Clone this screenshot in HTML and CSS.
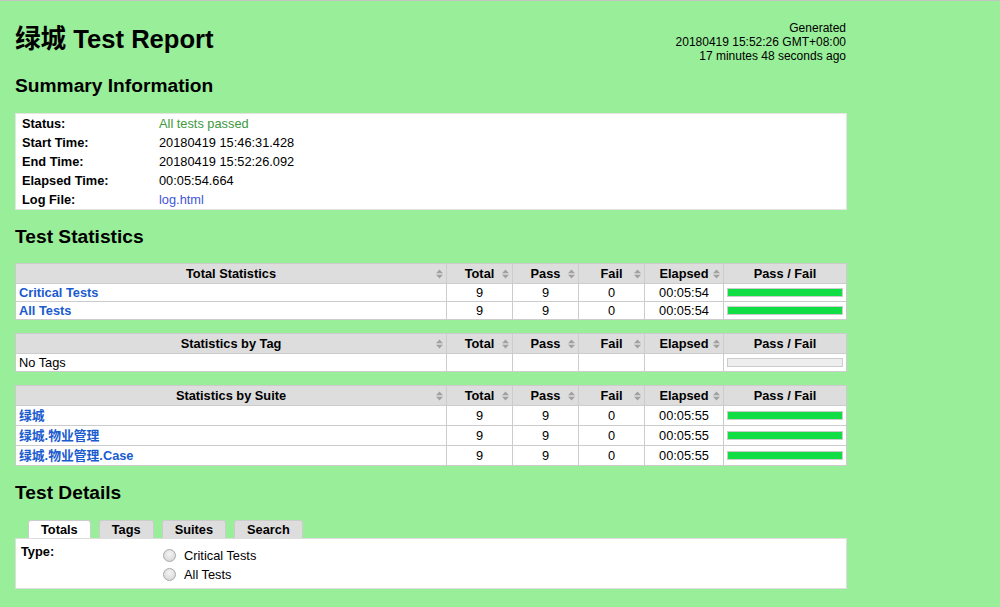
FILE: index.html
```html
<!DOCTYPE html>
<html>
<head>
<meta charset="utf-8">
<title>绿城 Test Report</title>
<link rel="stylesheet" href="styles.css">
</head>
<body>
<div class="page">
  <header class="header">
    <h1>绿城 Test Report</h1>
    <div class="generated">Generated<br>20180419 15:52:26 GMT+08:00<br>17 minutes 48 seconds ago</div>
  </header>

  <h2 class="h2 h2-summary">Summary Information</h2>
  <table class="summary">
    <tr><th>Status:</th><td class="pass-text">All tests passed</td></tr>
    <tr><th>Start Time:</th><td>20180419 15:46:31.428</td></tr>
    <tr><th>End Time:</th><td>20180419 15:52:26.092</td></tr>
    <tr><th>Elapsed Time:</th><td>00:05:54.664</td></tr>
    <tr><th>Log File:</th><td><a class="plain-link" href="#">log.html</a></td></tr>
  </table>

  <h2 class="h2 h2-stats">Test Statistics</h2>

  <table class="stats">
    <colgroup><col class="c-name"><col class="c-num"><col class="c-num"><col class="c-num"><col class="c-el"><col class="c-bar"></colgroup>
    <thead>
      <tr>
        <th class="sortable">Total Statistics<svg class="sort" width="7" height="10" viewBox="0 0 7 10"><path d="M3.5 0.5L7 4.2H0zM0 5.8h7L3.5 9.5z"/></svg></th>
        <th class="sortable">Total<svg class="sort" width="7" height="10" viewBox="0 0 7 10"><path d="M3.5 0.5L7 4.2H0zM0 5.8h7L3.5 9.5z"/></svg></th>
        <th class="sortable">Pass<svg class="sort" width="7" height="10" viewBox="0 0 7 10"><path d="M3.5 0.5L7 4.2H0zM0 5.8h7L3.5 9.5z"/></svg></th>
        <th class="sortable">Fail<svg class="sort" width="7" height="10" viewBox="0 0 7 10"><path d="M3.5 0.5L7 4.2H0zM0 5.8h7L3.5 9.5z"/></svg></th>
        <th class="sortable">Elapsed<svg class="sort" width="7" height="10" viewBox="0 0 7 10"><path d="M3.5 0.5L7 4.2H0zM0 5.8h7L3.5 9.5z"/></svg></th>
        <th>Pass / Fail</th>
      </tr>
    </thead>
    <tbody>
      <tr><td class="name"><a href="#">Critical Tests</a></td><td>9</td><td>9</td><td>0</td><td>00:05:54</td><td class="barcell"><div class="bar"><div class="bar-pass" style="width:100%"></div></div></td></tr>
      <tr><td class="name"><a href="#">All Tests</a></td><td>9</td><td>9</td><td>0</td><td>00:05:54</td><td class="barcell"><div class="bar"><div class="bar-pass" style="width:100%"></div></div></td></tr>
    </tbody>
  </table>

  <table class="stats">
    <colgroup><col class="c-name"><col class="c-num"><col class="c-num"><col class="c-num"><col class="c-el"><col class="c-bar"></colgroup>
    <thead>
      <tr>
        <th class="sortable">Statistics by Tag<svg class="sort" width="7" height="10" viewBox="0 0 7 10"><path d="M3.5 0.5L7 4.2H0zM0 5.8h7L3.5 9.5z"/></svg></th>
        <th class="sortable">Total<svg class="sort" width="7" height="10" viewBox="0 0 7 10"><path d="M3.5 0.5L7 4.2H0zM0 5.8h7L3.5 9.5z"/></svg></th>
        <th class="sortable">Pass<svg class="sort" width="7" height="10" viewBox="0 0 7 10"><path d="M3.5 0.5L7 4.2H0zM0 5.8h7L3.5 9.5z"/></svg></th>
        <th class="sortable">Fail<svg class="sort" width="7" height="10" viewBox="0 0 7 10"><path d="M3.5 0.5L7 4.2H0zM0 5.8h7L3.5 9.5z"/></svg></th>
        <th class="sortable">Elapsed<svg class="sort" width="7" height="10" viewBox="0 0 7 10"><path d="M3.5 0.5L7 4.2H0zM0 5.8h7L3.5 9.5z"/></svg></th>
        <th>Pass / Fail</th>
      </tr>
    </thead>
    <tbody>
      <tr><td class="name plain">No Tags</td><td></td><td></td><td></td><td></td><td class="barcell"><div class="bar"></div></td></tr>
    </tbody>
  </table>

  <table class="stats">
    <colgroup><col class="c-name"><col class="c-num"><col class="c-num"><col class="c-num"><col class="c-el"><col class="c-bar"></colgroup>
    <thead>
      <tr>
        <th class="sortable">Statistics by Suite<svg class="sort" width="7" height="10" viewBox="0 0 7 10"><path d="M3.5 0.5L7 4.2H0zM0 5.8h7L3.5 9.5z"/></svg></th>
        <th class="sortable">Total<svg class="sort" width="7" height="10" viewBox="0 0 7 10"><path d="M3.5 0.5L7 4.2H0zM0 5.8h7L3.5 9.5z"/></svg></th>
        <th class="sortable">Pass<svg class="sort" width="7" height="10" viewBox="0 0 7 10"><path d="M3.5 0.5L7 4.2H0zM0 5.8h7L3.5 9.5z"/></svg></th>
        <th class="sortable">Fail<svg class="sort" width="7" height="10" viewBox="0 0 7 10"><path d="M3.5 0.5L7 4.2H0zM0 5.8h7L3.5 9.5z"/></svg></th>
        <th class="sortable">Elapsed<svg class="sort" width="7" height="10" viewBox="0 0 7 10"><path d="M3.5 0.5L7 4.2H0zM0 5.8h7L3.5 9.5z"/></svg></th>
        <th>Pass / Fail</th>
      </tr>
    </thead>
    <tbody>
      <tr class="cjk"><td class="name"><a href="#">绿城</a></td><td>9</td><td>9</td><td>0</td><td>00:05:55</td><td class="barcell"><div class="bar"><div class="bar-pass" style="width:100%"></div></div></td></tr>
      <tr class="cjk"><td class="name"><a href="#">绿城.物业管理</a></td><td>9</td><td>9</td><td>0</td><td>00:05:55</td><td class="barcell"><div class="bar"><div class="bar-pass" style="width:100%"></div></div></td></tr>
      <tr class="cjk"><td class="name"><a href="#">绿城.物业管理.Case</a></td><td>9</td><td>9</td><td>0</td><td>00:05:55</td><td class="barcell"><div class="bar"><div class="bar-pass" style="width:100%"></div></div></td></tr>
    </tbody>
  </table>

  <h2 class="h2 h2-details">Test Details</h2>
  <ul class="tabs">
    <li class="tab active">Totals</li>
    <li class="tab">Tags</li>
    <li class="tab">Suites</li>
    <li class="tab">Search</li>
  </ul>
  <div class="details">
    <div class="type-label">Type:</div>
    <div class="radios">
      <label class="radio-row"><span class="radio"></span>Critical Tests</label>
      <label class="radio-row"><span class="radio"></span>All Tests</label>
    </div>
  </div>
</div>
</body>
</html>
```

FILE: styles.css
```css
html {
  border-top: 1px solid #c4c4c4;
}
body {
  margin: 0;
  background: #99ee99;
  color: #000;
  font-family: "Liberation Sans", "Noto Sans CJK SC", Arial, sans-serif;
  font-size: 12.8px;
  line-height: 15px;
}
.page {
  width: 832px;
  margin-left: 15px;
}
.header {
  display: flex;
  justify-content: space-between;
  align-items: flex-start;
  padding-top: 20px;
}
h1 {
  margin: 3px 0 0 0;
  font-size: 25.6px;
  line-height: 30px;
  font-weight: bold;
}
.generated {
  text-align: right;
  font-size: 12px;
  line-height: 14px;
  margin-right: 1px;
}
.h2 {
  font-size: 19.2px;
  line-height: 24px;
  font-weight: bold;
  margin: 0;
}
.h2-summary { margin-top: 11px; margin-bottom: 15px; }
.h2-stats { margin-top: 15px; margin-bottom: 14px; }
.h2-details { margin-top: 15px; margin-bottom: 15px; }

a {
  color: #1a5bcf;
  text-decoration: none;
  font-weight: bold;
}
.plain-link {
  font-weight: normal;
  color: #3f55d6;
}

.summary {
  width: 832px;
  background: #fff;
  border-collapse: collapse;
  border: 1px solid #e4e4e4;
}
.summary th, .summary td {
  padding: 2px 6px;
  height: 15px;
  text-align: left;
  vertical-align: middle;
}
.summary th {
  width: 131px;
  font-weight: bold;
}
.summary td { padding-left: 0; }
.pass-text { color: #3c9a3c; }

.stats {
  width: 832px;
  table-layout: fixed;
  border-collapse: collapse;
  background: #fff;
  margin-bottom: 13px;
}
.stats:last-of-type { margin-bottom: 0; }
.c-name { width: 431px; }
.c-num { width: 66px; }
.c-el { width: 79px; }
.c-bar { width: 123px; }
.stats th, .stats td {
  border: 1px solid #cccccc;
  padding: 1px 3px;
  line-height: 15px;
  text-align: center;
  vertical-align: middle;
}
.stats th {
  background: #dddddd;
  font-weight: bold;
  padding-top: 2px;
  padding-bottom: 2px;
  position: relative;
}
.stats td.name { text-align: left; }
.stats td.plain { font-weight: normal; }
.stats tr.cjk td { line-height: 17px; }
.sort {
  position: absolute;
  right: 3px;
  top: 50%;
  margin-top: -5px;
  fill: #a0a0a0;
}
.barcell { padding: 1px 2px; }
.bar {
  height: 7px;
  border: 1px solid #cccccc;
  background: #eeeeee;
}
.bar-pass {
  height: 100%;
  background: #11dd44;
}

.tabs {
  list-style: none;
  margin: 0;
  padding: 0 0 0 13px;
  display: flex;
  gap: 8px;
}
.tab {
  background: #dddddd;
  border: 1px solid #cccccc;
  border-bottom: none;
  border-radius: 3px 3px 0 0;
  padding: 0 12px;
  height: 17px;
  line-height: 18px;
  font-weight: bold;
}
.tab.active {
  background: #ffffff;
}
.details {
  background: #fff;
  border: 1px solid #dedede;
  display: grid;
  grid-template-columns: 147px auto;
  padding: 4px 0 4px 0;
}
.type-label {
  font-weight: bold;
  padding-left: 5px;
  line-height: 18px;
}
.radios {
  display: flex;
  flex-direction: column;
  padding-top: 3px;
}
.radio-row {
  display: flex;
  align-items: center;
  height: 19px;
  line-height: 19px;
}
.radio {
  width: 11px;
  height: 11px;
  border: 1px solid #a9a9a9;
  border-radius: 50%;
  background: radial-gradient(circle at 50% 35%, #f4f4f4 0%, #dcdcdc 70%, #cfcfcf 100%);
  margin-right: 8px;
  flex: none;
}
```
